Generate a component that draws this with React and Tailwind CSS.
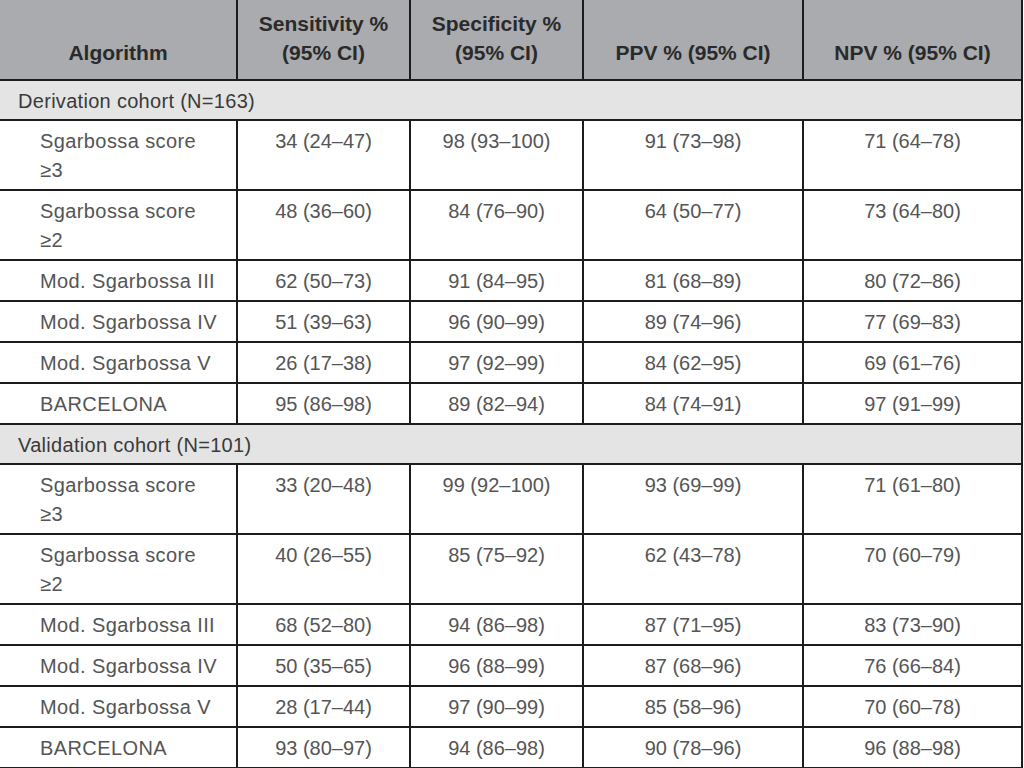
import React from "react";

const cols = "grid grid-cols-[238px_173px_173px_220px_219px]";

const sections = [
  {
    title: "Derivation cohort (N=163)",
    rows: [
      ["Sgarbossa score", "≥3", "34 (24–47)", "98 (93–100)", "91 (73–98)", "71 (64–78)"],
      ["Sgarbossa score", "≥2", "48 (36–60)", "84 (76–90)", "64 (50–77)", "73 (64–80)"],
      ["Mod. Sgarbossa III", null, "62 (50–73)", "91 (84–95)", "81 (68–89)", "80 (72–86)"],
      ["Mod. Sgarbossa IV", null, "51 (39–63)", "96 (90–99)", "89 (74–96)", "77 (69–83)"],
      ["Mod. Sgarbossa V", null, "26 (17–38)", "97 (92–99)", "84 (62–95)", "69 (61–76)"],
      ["BARCELONA", null, "95 (86–98)", "89 (82–94)", "84 (74–91)", "97 (91–99)"],
    ],
  },
  {
    title: "Validation cohort (N=101)",
    rows: [
      ["Sgarbossa score", "≥3", "33 (20–48)", "99 (92–100)", "93 (69–99)", "71 (61–80)"],
      ["Sgarbossa score", "≥2", "40 (26–55)", "85 (75–92)", "62 (43–78)", "70 (60–79)"],
      ["Mod. Sgarbossa III", null, "68 (52–80)", "94 (86–98)", "87 (71–95)", "83 (73–90)"],
      ["Mod. Sgarbossa IV", null, "50 (35–65)", "96 (88–99)", "87 (68–96)", "76 (66–84)"],
      ["Mod. Sgarbossa V", null, "28 (17–44)", "97 (90–99)", "85 (58–96)", "70 (60–78)"],
      ["BARCELONA", null, "93 (80–97)", "94 (86–98)", "90 (78–96)", "96 (88–98)"],
    ],
  },
];

function HeadCell({ children }) {
  return <div className="flex h-full items-end justify-center border-r-2 border-[#1c1c1c] pb-3 text-center">
      <div>{children}</div>
    </div>;
}

function Row({ row }) {
  const [label, second, ...vals] = row;
  return <div className={`${cols} ${second ? "h-[70px]" : "h-[41px]"} border-b-2 border-[#1c1c1c]`}>
      <div className="border-r-2 border-[#1c1c1c] pl-10 pt-1.5 tracking-[0.4px]">
        {label}
        {second && <br />}
        {second}
      </div>
      {vals.map((v, i) => <div key={i} className="border-r-2 border-[#1c1c1c] pt-1.5 text-center">
          {v}
        </div>)}
    </div>;
}

export default function App() {
  return <div className="min-h-screen w-full overflow-hidden bg-white font-['Liberation_Sans',Arial,sans-serif] text-[20px] leading-[29px] text-[#555555]">
      <div className="w-[1023px]">
        <div className={`${cols} h-[81px] border-b-2 border-[#1c1c1c] bg-[#a9abae] text-[21px] font-bold text-[#2a2a2a]`}>
          <HeadCell>Algorithm</HeadCell>
          <HeadCell>
            Sensitivity %<br />(95% CI)
          </HeadCell>
          <HeadCell>
            Specificity %<br />(95% CI)
          </HeadCell>
          <HeadCell>PPV % (95% CI)</HeadCell>
          <HeadCell>NPV % (95% CI)</HeadCell>
        </div>
        {sections.map(s => <div key={s.title}>
            <div className="h-[40px] border-b-2 border-r-2 border-[#1c1c1c] bg-[#e4e4e4] pl-[18px] pt-1.5 tracking-[0.3px] text-[#3a3a3a]">
              {s.title}
            </div>
            {s.rows.map((r, i) => <Row key={i} row={r} />)}
          </div>)}
      </div>
    </div>;
}
